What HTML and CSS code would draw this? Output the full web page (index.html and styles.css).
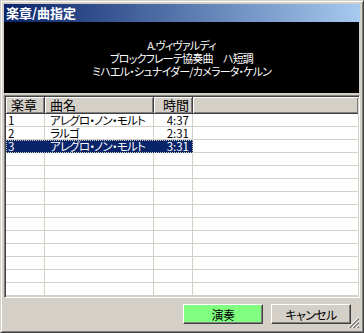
FILE: index.html
```html
<!DOCTYPE html>
<html lang="ja">
<head>
<meta charset="utf-8">
<link rel="stylesheet" href="styles.css">
</head>
<body>
<div class="window">
  <div class="titlebar">楽章/曲指定</div>
  <div class="info">
    <div class="info-line">A.ヴィヴァルディ</div>
    <div class="info-line">ブロックフレーテ協奏曲　ハ短調</div>
    <div class="info-line">ミハエル・シュナイダー/カメラータ・ケルン</div>
  </div>
  <div class="list">
    <div class="row header">
      <div class="cell c1 hcell">楽章</div>
      <div class="cell c2 hcell">曲名</div>
      <div class="cell c3 hcell center">時間</div>
      <div class="cell c4 hcell"></div>
    </div>
    <div class="row"><div class="cell c1">1</div><div class="cell c2">アレグロ・ノン・モルト</div><div class="cell c3 right">4:37</div><div class="cell c4"></div></div>
    <div class="row"><div class="cell c1">2</div><div class="cell c2">ラルゴ</div><div class="cell c3 right">2:31</div><div class="cell c4"></div></div>
    <div class="row"><div class="sel"><div class="cell c1">3</div><div class="cell c2">アレグロ・ノン・モルト</div><div class="cell c3 right">3:31</div></div><div class="cell c4"></div></div>
    <div class="row"><div class="cell c1"></div><div class="cell c2"></div><div class="cell c3"></div><div class="cell c4"></div></div>
    <div class="row"><div class="cell c1"></div><div class="cell c2"></div><div class="cell c3"></div><div class="cell c4"></div></div>
    <div class="row"><div class="cell c1"></div><div class="cell c2"></div><div class="cell c3"></div><div class="cell c4"></div></div>
    <div class="row"><div class="cell c1"></div><div class="cell c2"></div><div class="cell c3"></div><div class="cell c4"></div></div>
    <div class="row"><div class="cell c1"></div><div class="cell c2"></div><div class="cell c3"></div><div class="cell c4"></div></div>
    <div class="row"><div class="cell c1"></div><div class="cell c2"></div><div class="cell c3"></div><div class="cell c4"></div></div>
    <div class="row"><div class="cell c1"></div><div class="cell c2"></div><div class="cell c3"></div><div class="cell c4"></div></div>
    <div class="row"><div class="cell c1"></div><div class="cell c2"></div><div class="cell c3"></div><div class="cell c4"></div></div>
    <div class="row"><div class="cell c1"></div><div class="cell c2"></div><div class="cell c3"></div><div class="cell c4"></div></div>
    <div class="row"><div class="cell c1"></div><div class="cell c2"></div><div class="cell c3"></div><div class="cell c4"></div></div>
    <div class="row"><div class="cell c1"></div><div class="cell c2"></div><div class="cell c3"></div><div class="cell c4"></div></div>
  </div>
  <div class="buttons">
    <button class="btn play">演奏</button>
    <button class="btn">キャンセル</button>
  </div>
  <svg class="grip" width="12" height="12" viewBox="0 0 12 12">
    <path d="M11 1 L1 11 M11 5 L5 11 M11 9 L9 11" stroke="#808080" stroke-width="1" fill="none"/>
    <path d="M11 2 L2 11 M11 6 L6 11 M11 10 L10 11" stroke="#808080" stroke-width="1" fill="none"/>
    <path d="M11 0 L0 11 M11 4 L4 11 M11 8 L8 11" stroke="#ffffff" stroke-width="1" fill="none"/>
  </svg>
</div>
</body>
</html>
```
FILE: styles.css
```css
html, body {
  margin: 0;
  padding: 0;
  background: #d4d0c8;
}
body {
  font-family: "Noto Sans CJK JP", "Noto Sans", sans-serif;
  font-size: 12px;
  font-feature-settings: "palt";
  color: #000;
}
.window {
  position: relative;
  width: 364px;
  height: 333px;
  box-sizing: border-box;
  background: #d4d0c8;
  border: 1px solid;
  border-color: #d4d0c8 #404040 #404040 #d4d0c8;
  box-shadow: inset 1px 1px #ffffff, inset -1px -1px #808080;
  padding: 3px;
  display: flex;
  flex-direction: column;
  overflow: hidden;
}
.titlebar {
  height: 18px;
  flex: none;
  background: linear-gradient(to right, #0a246a, #a6caf0);
  color: #fff;
  font-weight: bold;
  font-size: 13px;
  line-height: 18px;
  padding-left: 2px;
}
.info {
  height: 71px;
  flex: none;
  margin-right: 1px;
  background: #000;
  color: #fff;
  display: flex;
  flex-direction: column;
  justify-content: center;
  align-items: center;
  font-size: 11px;
  letter-spacing: -0.8px;
  padding-top: 2px;
  box-sizing: border-box;
}
.info-line {
  line-height: 13px;
  height: 13px;
}
.list {
  margin-top: 2px;
  height: 203px;
  flex: none;
  box-sizing: border-box;
  background: #fff;
  border: 1px solid;
  border-color: #808080 #ffffff #ffffff #808080;
  box-shadow: inset 1px 1px #404040, inset -1px -1px #d4d0c8;
  padding: 1px;
  overflow: hidden;
}
.row {
  display: flex;
  height: 13px;
  line-height: 13px;
}
.cell {
  box-sizing: border-box;
  height: 13px;
  border-right: 1px solid #d4d0c8;
  border-bottom: 1px solid #d4d0c8;
  padding-left: 2px;
  white-space: nowrap;
  overflow: hidden;
  font-size: 11.5px;
  letter-spacing: -0.8px;
}
.c1 { width: 39px; }
.c2 { width: 109px; padding-left: 5px; }
.c3 { width: 39px; }
.c4 { flex: 1; border-right: none; }
.right { text-align: right; padding-right: 3px; letter-spacing: 0; }
.center { text-align: center; padding-left: 0; }
.header {
  height: 17px;
}
.hcell {
  height: 17px;
  line-height: 16px;
  background: #d4d0c8;
  border-right: 1px solid #404040;
  border-bottom: 1px solid #404040;
  box-shadow: inset 1px 1px #ffffff, inset -1px -1px #808080;
  font-size: 13px;
  letter-spacing: 0;
}
.hcell.c1 { padding-left: 5px; }
.hcell.c2 { padding-left: 5px; }
.hcell.center { padding-left: 6px; }
.hcell.c4 { border-right: none; }
.sel {
  display: flex;
  background: #0a246a;
  color: #fff;
  outline: 1px dotted #d4d0c8;
  outline-offset: -1px;
}
.sel .cell {
  border-color: #0a246a;
}
.buttons {
  flex: 1;
  display: flex;
  justify-content: flex-end;
  align-items: flex-start;
  gap: 8px;
  padding: 6px 9px 0 0;
}
.btn {
  width: 80px;
  height: 20px;
  box-sizing: border-box;
  margin: 0;
  padding: 0;
  font-family: "Noto Sans CJK JP", "Noto Sans", sans-serif;
  font-size: 12px;
  font-feature-settings: "palt";
  letter-spacing: -0.6px;
  color: #000;
  background: #d4d0c8;
  border: 1px solid;
  border-color: #ffffff #404040 #404040 #ffffff;
  box-shadow: inset -1px -1px #808080;
}
.btn.play {
  background: #80ff80;
}
.grip {
  position: absolute;
  right: 3px;
  bottom: 3px;
}
```
